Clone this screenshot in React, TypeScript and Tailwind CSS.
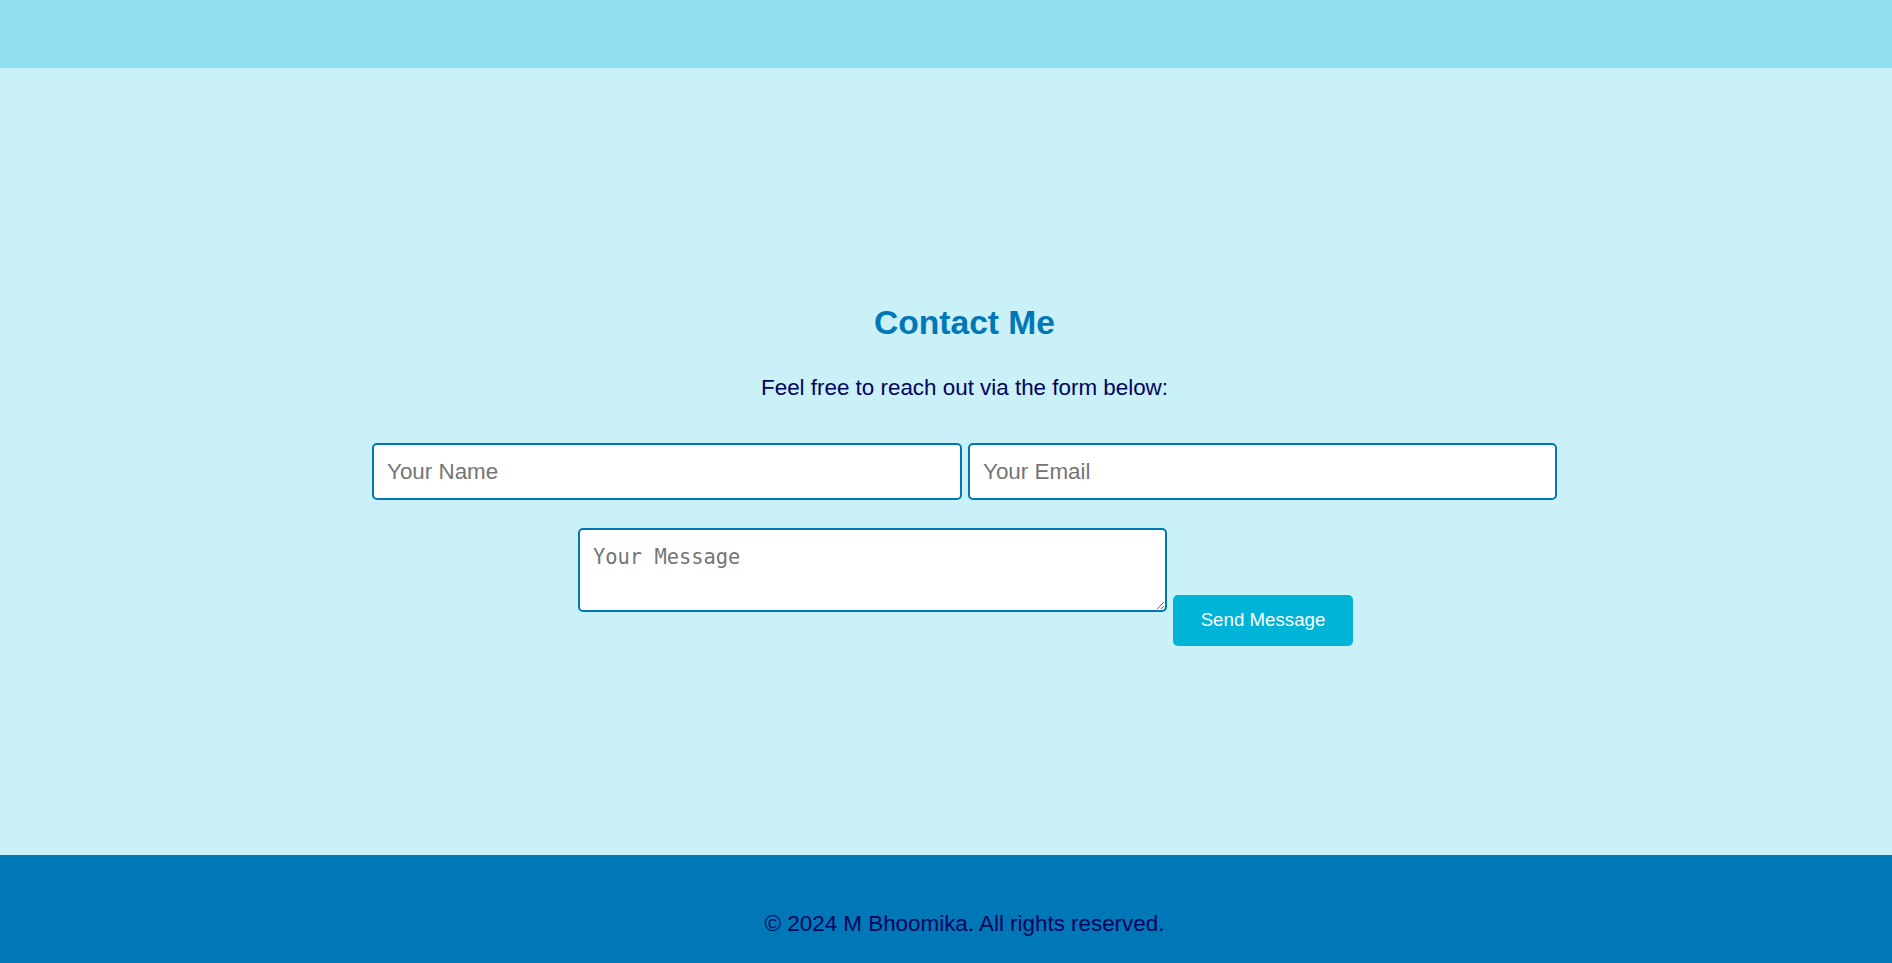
import React from "react";

export default function App() {
  return (
    <div className="min-h-screen font-['Liberation_Sans',Arial,sans-serif]">
      <header className="h-[68px] bg-[#90e0ef]" />
      <main className="h-[787px] bg-[#caf0f8] pt-[236px] pl-[37px] text-center">
        <h2 className="text-[33.6px] leading-[38px] font-bold text-[#0077b6]">Contact Me</h2>
        <p className="mt-[33px] text-[22.4px] leading-[26px] text-[#03045e]">
          Feel free to reach out via the form below:
        </p>
        <form className="mt-[42px] flex flex-col items-center" onSubmit={(e) => e.preventDefault()}>
          <div className="flex gap-[6px]">
            <input
              type="text"
              placeholder="Your Name"
              className="w-[590px] h-[57px] rounded-[5px] border-2 border-[#0077b6] bg-white px-[13px] text-[22.4px] text-[#03045e] placeholder:text-[#757575] outline-none font-['Liberation_Sans',Arial,sans-serif]"
            />
            <input
              type="email"
              placeholder="Your Email"
              className="w-[589px] h-[57px] rounded-[5px] border-2 border-[#0077b6] bg-white px-[13px] text-[22.4px] text-[#03045e] placeholder:text-[#757575] outline-none font-['Liberation_Sans',Arial,sans-serif]"
            />
          </div>
          <div className="mt-[28px] ml-[2px] flex items-start gap-[6px]">
            <textarea
              rows={2}
              placeholder="Your Message"
              className="block w-[589px] h-[84px] rounded-[5px] border-2 border-[#0077b6] bg-white pl-[13px] pr-[12px] pt-[15px] pb-[10px] text-[20.4px] leading-[24px] text-[#03045e] placeholder:text-[#757575] outline-none font-['DejaVu_Sans_Mono',monospace]"
            />
            <button
              type="submit"
              className="mt-[67px] w-[180px] h-[51px] rounded-[5px] bg-[#00b4d8] text-[18.7px] text-white font-['Liberation_Sans',Arial,sans-serif]"
            >
              Send Message
            </button>
          </div>
        </form>
      </main>
      <footer className="h-[108px] bg-[#0077b6] pt-[56px] pl-[37px] text-center text-[22.4px] leading-[25px] text-[#03045e]">
        © 2024 M Bhoomika. All rights reserved.
      </footer>
    </div>
  );
}
